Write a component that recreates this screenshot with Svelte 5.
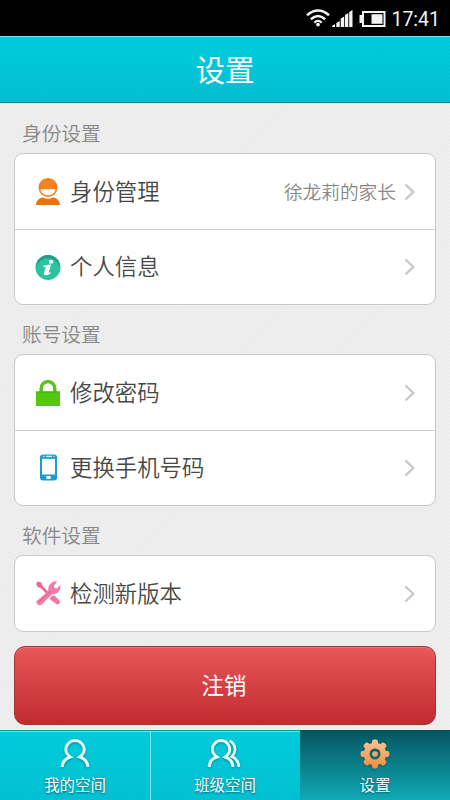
<script>
  const groups = [
    {
      title: '身份设置',
      rows: [
        { icon: 'person', label: '身份管理', value: '徐龙莉的家长' },
        { icon: 'info', label: '个人信息' }
      ]
    },
    {
      title: '账号设置',
      rows: [
        { icon: 'lock', label: '修改密码' },
        { icon: 'phone', label: '更换手机号码' }
      ]
    },
    { title: '软件设置', rows: [{ icon: 'tools', label: '检测新版本' }] }
  ];
  const tabs = [
    { icon: 'me', label: '我的空间' },
    { icon: 'class', label: '班级空间' },
    { icon: 'gear', label: '设置', active: true }
  ];
  const teeth = [0, 45, 90, 135, 180, 225, 270, 315];
</script>

<div class="screen">
  <div class="status">
    <svg class="wifi" width="24" height="18" viewBox="0 0 24 18" fill="none" stroke="#f2f2f2" stroke-width="2.6">
      <path d="M1 6.2 Q12 -3.2 23 6.2" />
      <path d="M4.800 10.200 Q12 3.800 19.200 10.200" />
      <path d="M8.300 13.600 Q12 10.200 15.700 13.600" stroke-width="2.2" />
      <circle cx="12" cy="15.600" r="1.900" fill="#f2f2f2" stroke="none" />
    </svg>
    <svg class="signal" width="21" height="18" viewBox="0 0 21 18" fill="#f2f2f2">
      <path d="M0 17v-1l3-2v3zM4.300 17v-4l3.400-2v6zM8.700 17V8.500l3.500-2V17zM13 17V5l3.300-2v14zM17.200 17V2L20.500 0v17z" />
    </svg>
    <svg class="battery" width="27" height="16" viewBox="0 0 27 16">
      <path d="M3 0h23.500v16H3v-4H.5V4H3z" fill="#f2f2f2" />
      <path d="M5 2h19.500v12H5z" fill="#000" />
      <path d="M12.500 3.200h11v9.600h-11z" fill="#f2f2f2" />
    </svg>
    <span class="time">17:41</span>
  </div>

  <header><h1>设置</h1></header>

  <main>
    {#each groups as group}
      <h2>{group.title}</h2>
      <div class="card">
        {#each group.rows as row}
          <div class="row">
            <svg class="icon" width="28" height="30" viewBox="0 0 28 30">
              {#if row.icon === 'person'}
                <circle cx="14" cy="10.500" r="9.500" fill="#f58220" />
                <path d="M6.500 12.300h15c-.6 3.900-3.500 5.900-7.500 5.900s-6.900-2-7.500-5.900z" fill="#fff" />
                <path d="M2 28c.3-4.200 2.700-6.700 7-7.400 3 1.600 7 1.600 10 0 4.300.7 6.700 3.200 7 7.400z" fill="#ea720d" />
              {:else if row.icon === 'info'}
                <circle cx="14" cy="15.500" r="12.500" fill="#2cc3a0" />
                <path d="M2 15a12 12 0 0 1 24 0A12.500 12 0 0 0 2 15z" fill="#1c9f82" />
                <ellipse cx="17" cy="9.800" rx="2.300" ry="2" fill="#fff" />
                <path d="M9.500 13.500l7.600-1-2.600 8.500 2-.9.300.8c-2 1.700-3.600 2.400-5.300 2.200-1.500-.2-1.900-1-1.500-2.200l1.800-5.700-2.400.1z" fill="#fff" />
              {:else if row.icon === 'lock'}
                <path d="M7.200 15V10.500a6.800 7 0 0 1 13.600 0V15" fill="none" stroke="#5bc321" stroke-width="3.400" />
                <rect x="2" y="13.500" width="24" height="14.500" fill="#53c60e" />
                <path d="M2 13.500h24v1H2z" fill="#46ab0b" />
              {:else if row.icon === 'phone'}
                <rect x="6" y="1.500" width="17" height="26" rx="3" fill="#1b9dce" />
                <rect x="8" y="5.800" width="13" height="15.700" fill="#fff" />
                <path d="M9 3.400h1.500M12 3.400h6M19.500 3.400H20.500" stroke="#d8f3ff" stroke-width="1.200" />
                <rect x="12.300" y="23" width="4.400" height="3" rx=".7" fill="#fff" />
              {:else}
                <path d="M2 5l1.700-2.500 3.600 1 1.500 3.800 7 7.200-1.900 1.700-7-7L4 8.300z" fill="#ee6598" />
                <path d="M15.500 19.500l3-3 2.400.5 4.600 4.500c1.500 1.700-.9 4.600-3.200 3.600l-5.700-4.400z" fill="#f276a5" />
                <path d="M2.500 22.200L14.300 12c-.7-4.800 2.200-9.300 7.900-9.700l.6.900-3 3.700.6 2.200 2.500.3 2.600-3 .9.800c.2 5-3.900 8.600-8 7.800L7 26c-1.700 1.300-5.500-2-4.500-3.800z" fill="#f47aa8" />
                <path d="M4.200 23.500L16.500 12.500" stroke="#dc5386" stroke-width=".9" fill="none" />
              {/if}
            </svg>
            <span class="label">{row.label}</span>
            {#if row.value}<span class="value">{row.value}</span>{/if}
            <svg class="chevron" width="12" height="18" viewBox="0 0 12 18">
              <path d="M1.500 1.500L9.300 9l-7.800 7.500" fill="none" stroke="#c9c9c9" stroke-width="2.400" />
            </svg>
          </div>
        {/each}
      </div>
    {/each}
    <button>注销</button>
  </main>

  <nav>
    {#each tabs as tab}
      <div class="tab" class:active={tab.active}>
        <svg width="36" height="32" viewBox="0 0 36 32" fill="none" stroke="#e3fdff" stroke-width="3">
          {#if tab.icon === 'me'}
            <path d="M5 29C5.500 24 8.500 20.500 13.300 19 10.500 17 8.800 14.500 8.800 11.800a9.200 9.200 0 0 1 18.400 0C27.200 14.500 25.500 17 22.700 19c4.800 1.500 7.800 5 8.300 10" />
          {:else if tab.icon === 'class'}
            <path d="M2 29c.5-5 3-8.500 7.800-10C7 17 5.300 14.500 5.300 11.800c0-5 3.700-9.200 8.700-9.200s8.700 4.200 8.700 9.200c0 2.700-1.700 5.200-4.500 7.200 4.800 1.500 7.300 5 7.800 10" />
            <path d="M22.500 2.800c3.800 1.900 5.700 5.400 5.500 9-.2 2.900-1.300 5-3.200 6.700 4.500 1.900 6.700 5.500 7.200 10.500" stroke-width="2.700" />
          {:else}
            <defs>
              <linearGradient id="gear" gradientUnits="userSpaceOnUse" x1="0" y1="2" x2="0" y2="30">
                <stop offset="0" stop-color="#ffc394" />
                <stop offset="1" stop-color="#f68a3a" />
              </linearGradient>
              <mask id="gear-shape">
                <g fill="#fff" stroke="none">
                  {#each teeth as angle}
                    <rect x="15" y="1.600" width="6" height="7" rx="2" transform="rotate({angle} 18 16)" />
                  {/each}
                  <circle cx="18" cy="16" r="11.300" />
                </g>
                <circle cx="18" cy="16" r="5.500" fill="#000" stroke="none" />
                <circle cx="18" cy="16" r="2.800" fill="#fff" stroke="none" />
              </mask>
            </defs>
            <rect width="36" height="32" fill="url(#gear)" stroke="none" mask="url(#gear-shape)" />
          {/if}
        </svg>
        <span>{tab.label}</span>
      </div>
    {/each}
  </nav>
</div>

<style>
  :global(body) { margin: 0; }
  .screen {
    width: 450px;
    height: 800px;
    overflow: hidden;
    display: flex;
    flex-direction: column;
    font-family: "Noto Sans CJK SC DemiLight", "Noto Sans CJK SC", sans-serif;
    font-weight: 350;
    background: repeating-linear-gradient(135deg, #efefef 0 1.400px, #ebebeb 1.400px 2.800px);
  }
  .status {
    height: 36px;
    flex: none;
    box-sizing: border-box;
    display: flex;
    align-items: center;
    justify-content: flex-end;
    padding: 2px 10px 0 0;
    background: #000;
  }
  .wifi { margin-bottom: 2px; }
  .signal { margin-left: 2px; }
  .battery { margin-left: 6px; }
  .time {
    margin-left: 5px;
    font: 19.500px/34px Roboto, sans-serif;
    padding-top: 1px;
    color: #f2f2f2;
  }
  header {
    height: 67px;
    flex: none;
    box-sizing: border-box;
    border-top: 1px solid #6ce4ee;
    border-bottom: 1px solid #078a98;
    background:
      repeating-linear-gradient(135deg, transparent 0 1.400px, rgba(0, 100, 120, .04) 1.400px 2.800px),
      linear-gradient(#00cddd, #03c0d3);
  }
  h1 {
    margin: 0;
    text-align: center;
    font-family: "Noto Sans CJK SC", sans-serif;
    font-size: 29.500px;
    line-height: 62px;
    font-weight: 400;
    color: #fff;
  }
  main { flex: 1; padding: 1px 14px 0; }
  h2 {
    margin: 0;
    height: 39px;
    padding: 10px 0 0 8px;
    font-size: 19.700px;
    line-height: 38px;
    font-weight: inherit;
    color: #888;
  }
  .card {
    box-sizing: border-box;
    border: 1px solid #c9c9c9;
    border-radius: 9px;
    background: #fff;
  }
  .row {
    height: 75px;
    display: flex;
    align-items: center;
    padding: 0 19px;
  }
  .row + .row { border-top: 1px solid #cdcdcd; height: 74px; }
  .label {
    flex: 1;
    margin-left: 8px;
    padding-bottom: 4px;
    font-size: 22.400px;
    color: #484848;
  }
  .value {
    margin-right: 8px;
    padding-bottom: 3px;
    font-size: 18.700px;
    color: #888;
  }
  button {
    display: block;
    width: 100%;
    height: 79px;
    margin: 14px 0 0;
    padding: 0 2px 4px 0;
    border: 1px solid #a03538;
    border-radius: 11px;
    box-shadow: inset 0 1px #ee7374;
    background: linear-gradient(#e85759, #c12c2f);
    color: #fff;
    font-family: "Noto Sans CJK SC", sans-serif;
    font-size: 22.400px;
    font-weight: 400;
  }
  nav {
    height: 70px;
    flex: none;
    display: flex;
  }
  .tab {
    flex: 1;
    box-sizing: border-box;
    display: flex;
    flex-direction: column;
    align-items: center;
    padding-top: 7px;
    border-top: 1px solid #0797a5;
    box-shadow: inset 0 1px #61e5ee;
    background:
      repeating-linear-gradient(135deg, transparent 0 1.400px, rgba(0, 100, 120, .04) 1.400px 2.800px),
      linear-gradient(#00cddd, #02c2d3);
    color: #fff;
  }
  .tab + .tab { box-shadow: inset 1px 0 #7be7ee, inset 0 1px #61e5ee; }
  .tab.active {
    border-color: #024e56;
    box-shadow: none;
    background: linear-gradient(#045660, #11a9b6);
  }
  .tab svg { filter: drop-shadow(0 1px 1px rgba(0, 75, 85, .55)); }
  .tab span {
    font-family: "Noto Sans CJK SC", sans-serif;
    font-size: 15.400px;
    line-height: 26px;
    margin-top: 1px;
    font-weight: 400;
    text-shadow: 0 1px 2px rgba(0, 75, 85, .8);
  }
</style>
